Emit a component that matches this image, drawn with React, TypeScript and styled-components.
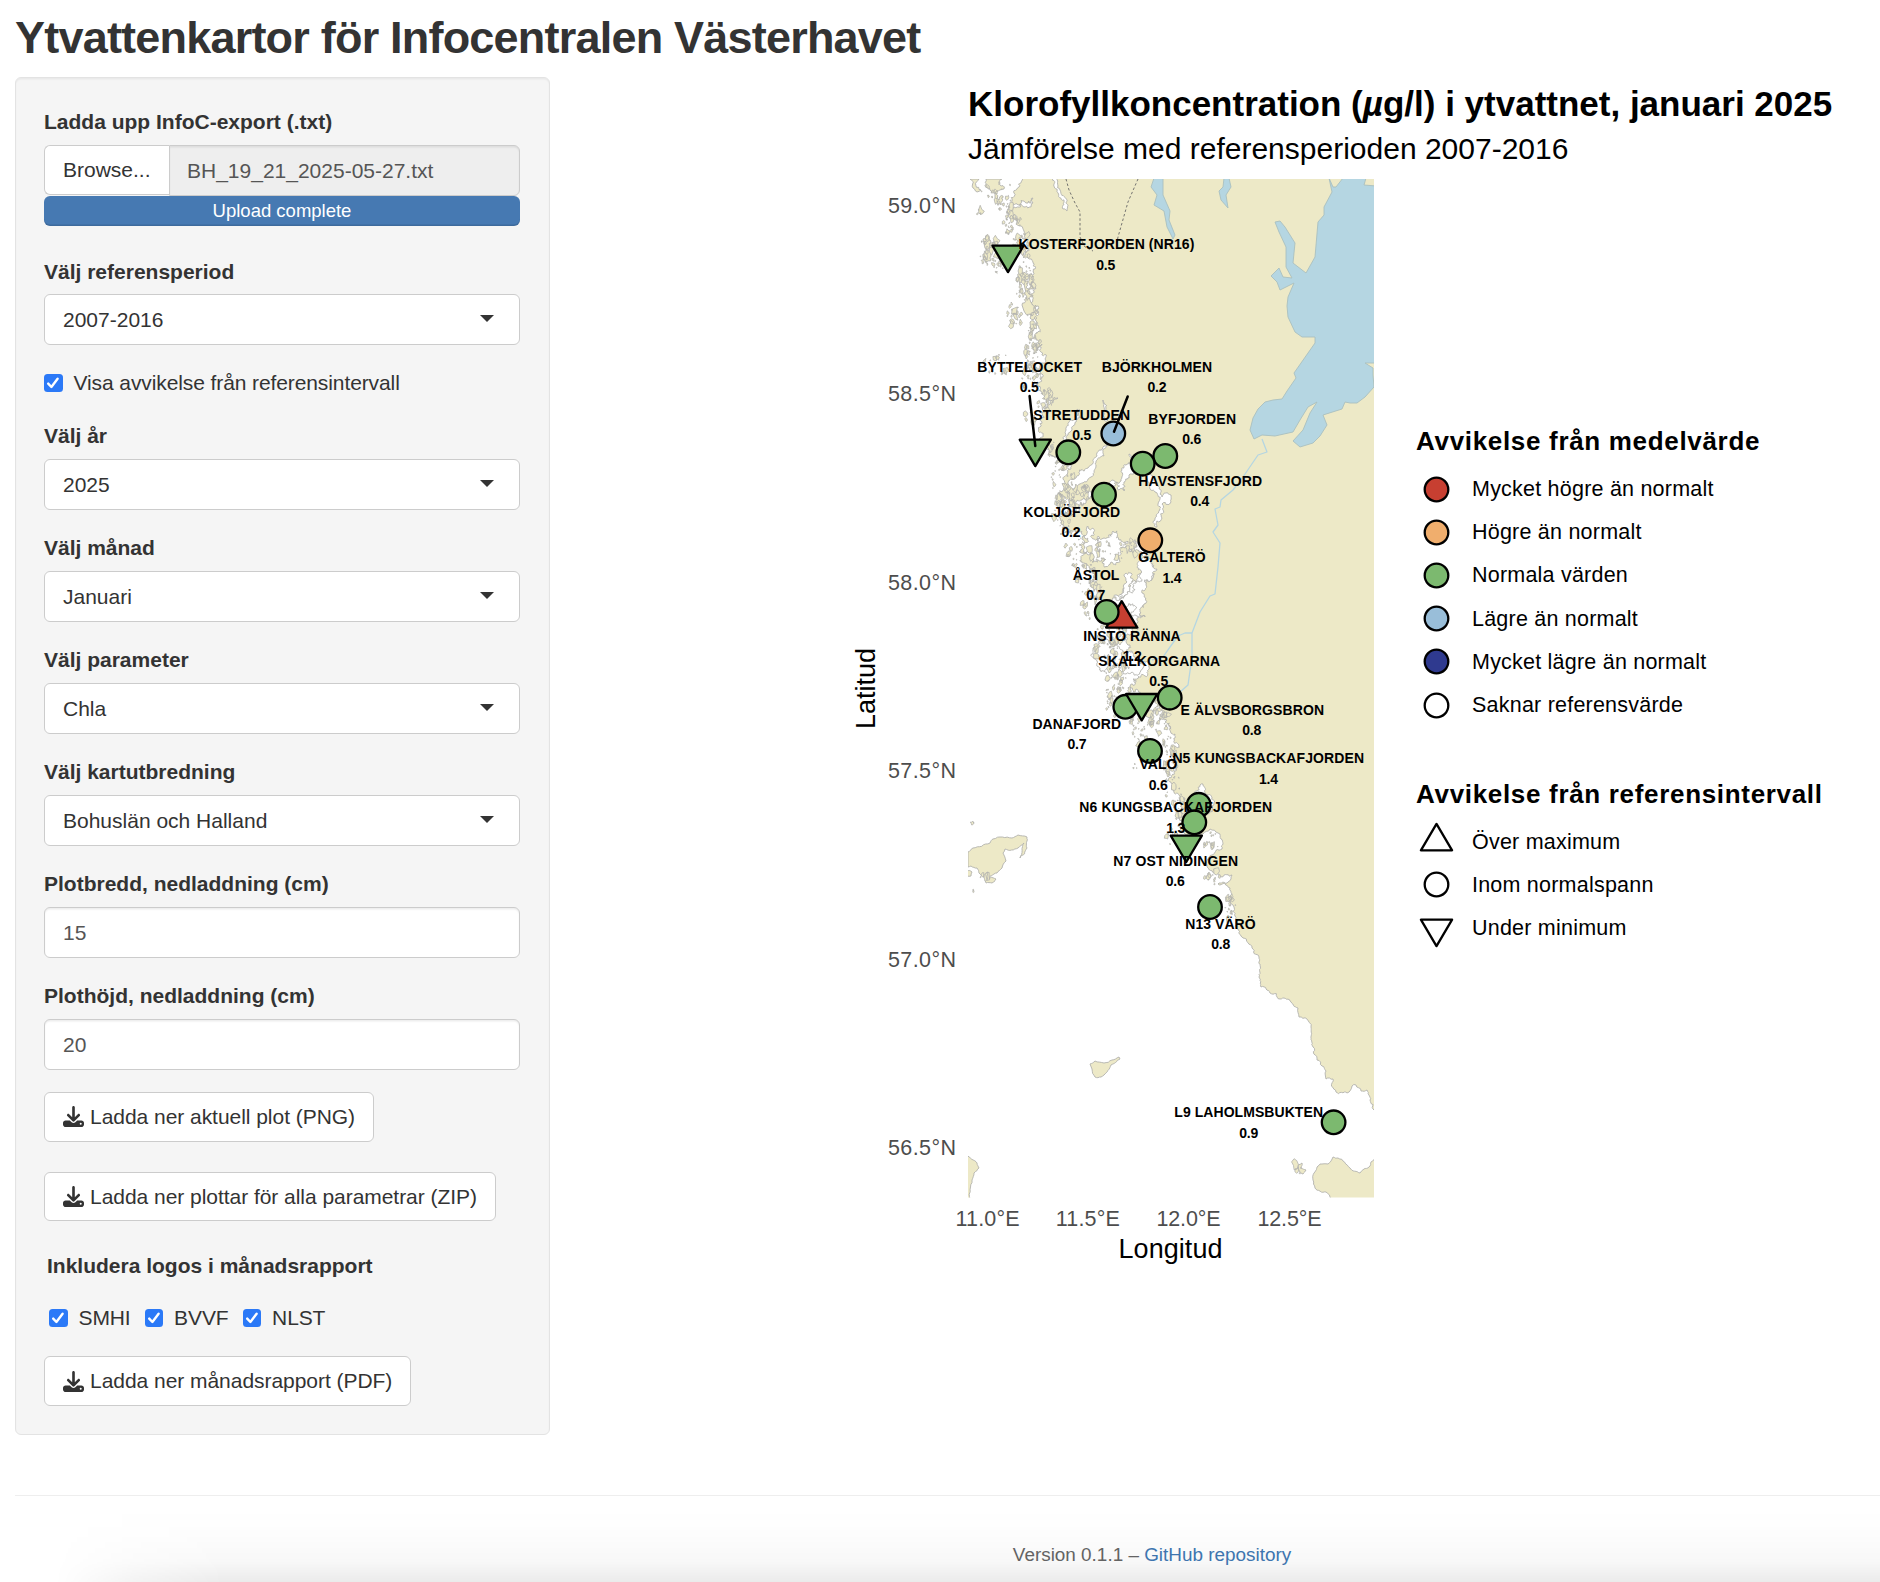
import React from "react";
import styled, { createGlobalStyle } from "styled-components";
import { FaDownload } from "react-icons/fa6";

const GlobalStyle = createGlobalStyle`
  *, *::before, *::after { box-sizing: border-box; }
  html, body { margin: 0; padding: 0; }
  body {
    background: #fff;
    color: #333;
    font-family: "Liberation Sans", Arial, Helvetica, sans-serif;
    font-size: 21px;
    line-height: 30px;
    overflow: hidden;
  }
`;

const Page = styled.div`
  width: 1880px;
  height: 1582px;
  display: flex;
  flex-direction: column;
  overflow: hidden;
`;

const PageTitle = styled.h1`
  margin: 0;
  padding: 13px 0 0 15px;
  height: 77px;
  font-size: 45px;
  font-weight: 700;
  line-height: 50px;
  letter-spacing: -0.79px;
  white-space: nowrap;
`;

const Columns = styled.div`
  display: flex;
  align-items: flex-start;
  height: 1418px;
`;

const Sidebar = styled.aside`
  width: 535px;
  height: 1358px;
  margin-left: 15px;
  padding: 29px 29px 28px 28px;
  background: #f5f5f5;
  border: 1px solid #e3e3e3;
  border-radius: 6px;
  box-shadow: inset 0 1.5px 1.5px rgba(0, 0, 0, 0.05);
  display: flex;
  flex-direction: column;
  align-items: stretch;
`;

const Field = styled.div<{ $after?: number; $gap?: number }>`
  display: flex;
  flex-direction: column;
  gap: ${(p) => p.$gap ?? 8}px;
  margin-bottom: ${(p) => p.$after ?? 23}px;
`;

const Label = styled.label<{ $indent?: number }>`
  font-weight: 700;
  padding-left: ${(p) => p.$indent ?? 0}px;
`;

const FileGroup = styled.div`
  display: flex;
  flex-direction: column;
`;

const FileRow = styled.div`
  display: flex;
  height: 51px;
`;

const BrowseButton = styled.button`
  width: 125px;
  height: 50px;
  padding: 0 0 0 18px;
  text-align: left;
  font: inherit;
  color: #333;
  background: #fff;
  border: 1px solid #ccc;
  border-right: 0;
  border-radius: 6px 0 0 6px;
`;

const FileName = styled.div`
  flex: 1;
  padding: 10px 17px;
  line-height: 30px;
  color: #555;
  background: #eee;
  border: 1px solid #ccc;
  border-radius: 0 6px 6px 0;
  box-shadow: inset 0 1.5px 1.5px rgba(0, 0, 0, 0.075);
`;

const Progress = styled.div`
  height: 30px;
  border-radius: 6px;
  background: #4679b2;
  box-shadow: inset 0 -1.5px 0 rgba(0, 0, 0, 0.12);
  color: #fff;
  font-size: 18.5px;
  line-height: 30px;
  text-align: center;
`;

const SelectBox = styled.div`
  height: 51px;
  padding: 0 25px 0 18px;
  display: flex;
  align-items: center;
  justify-content: space-between;
  background: #fff;
  border: 1px solid #ccc;
  border-radius: 6px;
  &::after {
    content: "";
    border: 7px solid transparent;
    border-top-color: #333;
    border-bottom: 0;
    margin-top: -3px;
  }
`;

const NumberBox = styled.div`
  height: 51px;
  padding: 0 18px;
  display: flex;
  align-items: center;
  color: #555;
  background: #fff;
  border: 1px solid #ccc;
  border-radius: 6px;
  box-shadow: inset 0 1.5px 1.5px rgba(0, 0, 0, 0.075);
`;

const CheckRow = styled.div<{ $indent?: number; $after: number }>`
  display: flex;
  gap: 14px;
  padding-left: ${(p) => p.$indent ?? 0}px;
  margin-bottom: ${(p) => p.$after}px;
`;

const CheckItem = styled.div`
  display: flex;
  align-items: center;
  gap: 11px;
  letter-spacing: -0.1px;
`;

const CheckMark = styled.span`
  width: 18.5px;
  height: 18px;
  border-radius: 3.5px;
  background: #2b79f7;
  display: flex;
  align-items: center;
  justify-content: center;
`;

const DownloadButton = styled.button<{ $after: number }>`
  align-self: flex-start;
  height: 50px;
  padding: 0 18px;
  margin-bottom: ${(p) => p.$after}px;
  display: flex;
  align-items: center;
  gap: 6px;
  font: inherit;
  letter-spacing: -0.04px;
  color: #333;
  background: #fff;
  border: 1px solid #ccc;
  border-radius: 6px;
  white-space: nowrap;
`;

const Plot = styled.main`
  margin-left: 290px;
  color: #000;
`;

const PlotTitle = styled.h2`
  margin: 6px 0 0 128px;
  font-size: 35px;
  line-height: 42px;
  font-weight: 700;
  white-space: nowrap;
`;

const PlotSubtitle = styled.p`
  margin: 6px 0 0 128px;
  font-size: 30px;
  line-height: 36px;
  white-space: nowrap;
`;

const PlotBody = styled.div`
  display: flex;
  align-items: flex-start;
`;

const MapSvg = styled.svg`
  display: block;
  margin-top: 3px;
  flex: none;
`;

const Legends = styled.div`
  margin: 257px 0 0 36px;
  display: flex;
  flex-direction: column;
  gap: 50px;
`;

const LegendTitle = styled.h3`
  margin: 0 0 9.5px;
  font-size: 26px;
  line-height: 34px;
  letter-spacing: 0.68px;
  white-space: nowrap;
`;

const LegendItem = styled.div`
  height: 43.2px;
  display: flex;
  align-items: center;
  gap: 15px;
  font-size: 21.5px;
  letter-spacing: 0.22px;
  white-space: nowrap;
`;

const Footer = styled.footer`
  position: relative;
  flex: 1;
  margin-left: 15px;
  padding: 44px 0 0 409px;
  border-top: 1.5px solid #eee;
  text-align: center;
  font-size: 18.9px;
  color: #666;
  &::after {
    content: "";
    position: absolute;
    inset: 12px 0 0 0;
    background: linear-gradient(
      rgba(0, 0, 0, 0) 0%,
      rgba(0, 0, 0, 0.006) 35%,
      rgba(0, 0, 0, 0.028) 72%,
      rgba(0, 0, 0, 0.08) 100%
    );
    mask-image: linear-gradient(90deg, transparent 40px, rgba(0, 0, 0, 0.6) 120px, #000 210px);
    pointer-events: none;
  }
`;

const FooterLink = styled.a`
  color: #4078b4;
  text-decoration: none;
`;

type Pt = [number, number];

const makeRandom = (seed: number) => () => {
  seed = (seed + 0x6d2b79f5) | 0;
  let t = Math.imul(seed ^ (seed >>> 15), 1 | seed);
  t = (t + Math.imul(t ^ (t >>> 7), 61 | t)) ^ t;
  return ((t ^ (t >>> 14)) >>> 0) / 4294967296;
};

const pts = (s: string): Pt[] => s.split(" ").map((p) => p.split(",").map(Number) as Pt);

function roughen(line: Pt[], amount: number, seed: number, minLength = 2.5): Pt[] {
  const rnd = makeRandom(seed);
  const out: Pt[] = [line[0]];
  const split = (a: Pt, b: Pt) => {
    const dx = b[0] - a[0];
    const dy = b[1] - a[1];
    const len = Math.hypot(dx, dy);
    if (len < minLength) {
      out.push(b);
      return;
    }
    const k = (rnd() - 0.5) * amount;
    const m: Pt = [(a[0] + b[0]) / 2 - dy * k, (a[1] + b[1]) / 2 + dx * k];
    split(a, m);
    split(m, b);
  };
  for (let i = 1; i < line.length; i++) split(line[i - 1], line[i]);
  return out;
}

const toPath = (line: Pt[]) => "M" + line.map((p) => p[0].toFixed(1) + " " + p[1].toFixed(1)).join("L");

const skerryCoast = pts(
  "1023,179 1019,187 1014,193 1012,203 1008,206 1018,205 1026,203 1033,198 1033,203 1024,207 1012,210 1010,215 1017,221 1021,226 1024,231 1022,238 1028,246 1026,252 1033,262 1035,269 1030,274 1029,282 1036,288 1031,294 1031,303 1037,306 1039,312 1036,315 1032,311 1030,318 1037,322 1038,332 1036,338 1042,344 1041,352 1045,359 1040,366 1042,374 1037,382 1042,392 1049,399 1058,398 1050,404 1043,412 1042,422 1038,428 1043,435 1042,443 1050,450 1054,457 1062,463 1068,472 1063,479 1066,486 1064,497 1069,503 1064,514 1063,526 1060,534 1067,527 1076,532 1080,545 1086,553 1083,563 1089,568 1093,578 1094,590 1098,600 1108,601 1117,599 1127,590 1137,582 1143,572 1140,565 1146,557 1151,565 1150,580 1141,588 1138,597 1144,605 1136,608 1145,617 1137,620 1139,628 1127,634 1130,645 1126,652 1133,659 1150,661 1149,669 1145,676 1133,679 1131,688 1128,695 1147,697 1158,699 1160,707 1157,714 1165,722 1171,727 1175,734 1172,750 1177,762 1172,775 1174,792 1180,804 1177,812 1183,820 1183,832",
);
const southCoast = pts(
  "1183,832 1193,836 1203,834 1210,829 1218,833 1221,839 1222,849 1212,855 1207,867 1215,873 1222,877 1232,875 1231,879 1228,882 1218,884 1230,888 1232,894 1228,900 1234,907 1235,916 1238,929 1243,938 1252,948 1259,957 1259,977 1261,987 1270,993 1280,999 1290,1001 1298,1008 1299,1017 1307,1019 1311,1027 1313,1047 1317,1060 1322,1066 1326,1071 1326,1079 1333,1079 1336,1092 1347,1093 1352,1086 1356,1085 1361,1091 1367,1090 1370,1100 1374,1110",
);

const mainland =
  toPath([...roughen(skerryCoast, 1.0, 11, 2), ...roughen(southCoast, 0.5, 5, 2.5)]) + "L1376 1110L1376 177L1023 177Z";

const smoothIslands = [
  "968,852 973,848 990,843 993,839 1012,838 1018,835 1027,837 1027,848 1020,858 1024,843 1018,848 1005,849 1003,853 1006,861 1002,868 997,873 985,878 979,873 977,868 971,866 968,867",
  "1090,1064 1095,1061 1104,1063 1112,1060 1119,1057 1120,1059 1111,1065 1104,1075 1101,1077 1095,1077 1092,1069",
  "967,1155 977,1163 979,1168 974,1173 972,1180 970,1199 967,1199",
  "1331,1199 1326,1192 1315,1188 1313,1180 1314,1173 1320,1164 1328,1164 1333,1157 1338,1158 1350,1168 1360,1173 1369,1167 1375,1158 1375,1199",
  "1298,1165 1302,1163 1301,1168 1306,1170 1303,1174 1299,1171",
  "985,880 990,877 996,879 992,883 986,883",
  "967,870 972,872 971,876 967,876",
  "970,179 977,192 981,190 979,179",
  "986,179 990,190 997,194 1004,189 1002,179",
  "995,192 999,200 1003,196 1001,205 995,200",
  "983,239 988,240 990,246 986,250 991,256 986,262 983,254 985,248",
  "1018,276 1022,273 1027,276 1026,283 1020,285",
  "1024,284 1028,281 1030,292 1033,295 1027,297",
  "1022,305 1030,300 1036,305 1038,312 1031,314 1024,311",
  "1030,322 1034,321 1035,328 1031,332",
];

const fjords: [string, number][] = [
  ["1068,484 1076,478 1088,468 1097,456 1104,446 1109,443 1104,456 1096,467 1091,477 1080,484 1073,490", 0.5],
  ["1063,441 1066,430 1074,420 1077,409 1080,410 1075,423 1068,435 1066,442", 0.6],
  ["1103,400 1106,408 1108,420 1105,421 1103,412", 0.7],
  ["1074,504 1082,500 1086,490 1092,492 1086,503 1079,511 1070,515 1068,508", 0.9],
  ["1115,486 1121,481 1122,470 1127,464 1133,467 1129,475 1124,482 1124,491 1119,490 1110,484", 1.0],
  ["1129,454 1138,457 1150,474 1158,486 1162,497 1171,495 1168,505 1162,504 1162,518 1157,527 1155,519 1158,504 1155,492 1146,477 1134,463", 0.7],
  ["1084,535 1096,550 1104,538 1113,531 1119,540 1128,541 1133,550 1141,540 1147,546 1146,556 1135,553 1124,548 1119,558 1111,562 1101,558 1092,562", 1.2],
  ["1140,558 1152,560 1152,578 1146,585 1142,593 1144,604 1141,613 1132,616 1121,601 1125,592 1134,586 1142,572", 0.9],
  ["1124,576 1131,573 1132,583 1127,592 1116,600 1124,588", 0.9],
  ["1093,648 1108,640 1124,652 1140,662 1138,675 1126,674 1118,664 1105,672 1098,662", 0.8],
  ["1200,785 1203,784 1205,793 1214,804 1212,812 1202,817 1195,826 1192,815 1199,800", 0.7],
  ["1052,178 1057,178 1060,190 1066,203 1067,211 1063,209 1058,193", 0.5],
];

const lakes = [
  "1343,178 1366,178 1364,185 1376,186 1376,363 1365,363 1373,368 1373,375 1374,387 1365,397 1357,403 1350,403 1345,402 1342,409 1323,415 1327,425 1320,436 1313,443 1300,447 1293,441 1303,430 1310,413 1317,402 1308,407 1300,420 1293,432 1275,436 1262,435 1254,439 1250,430 1253,418 1258,409 1265,402 1273,400 1282,399 1287,391 1296,378 1294,373 1308,353 1315,343 1315,337 1302,337 1295,332 1288,317 1287,306 1288,297 1294,283 1280,290 1277,282 1271,276 1279,268 1283,277 1292,278 1286,267 1286,247 1279,232 1275,222 1280,221 1285,227 1295,243 1293,263 1306,273 1315,257 1318,222 1324,215 1324,207 1332,192 1329,178 1333,187 1336,187",
  "1154,178 1163,178 1163,195 1170,211 1169,220 1175,235 1173,239 1167,227 1164,211 1154,205 1157,195 1151,187",
  "1224,178 1229,178 1231,187 1226,195 1228,208 1221,200 1219,191 1223,187",
];

const rivers = [
  "1262,439 1267,452 1258,455 1243,477 1233,490 1221,500 1220,507 1215,509 1218,525 1213,532 1220,543 1218,567 1215,594 1210,596 1200,612 1192,633 1192,657 1188,685 1180,692",
  "1192,633 1185,633 1178,636 1170,647 1163,657 1152,660",
];

const borders = [
  "1066,179 1069,190 1075,203 1080,212 1080,237 1085,247 1093,251",
  "1138,179 1128,202 1122,223 1118,237 1117,242",
];

const clusters: [number, number, number, number, number][] = [
  [997, 190, 20, 12, 14],
  [1006, 205, 9, 8, 12],
  [1013, 224, 9, 15, 26],
  [978, 212, 5, 3, 4],
  [989, 250, 10, 15, 26],
  [1000, 265, 12, 8, 20],
  [1022, 246, 10, 14, 24],
  [1024, 280, 10, 20, 40],
  [1014, 315, 9, 12, 20],
  [1031, 318, 8, 12, 12],
  [1033, 350, 8, 24, 38],
  [998, 366, 15, 14, 14],
  [1032, 380, 10, 16, 22],
  [1046, 402, 8, 14, 18],
  [1030, 418, 6, 8, 6],
  [1054, 452, 7, 14, 14],
  [1062, 478, 11, 20, 32],
  [1064, 512, 12, 22, 42],
  [1078, 495, 11, 14, 22],
  [1074, 548, 10, 18, 20],
  [1085, 575, 10, 14, 16],
  [1093, 600, 12, 20, 30],
  [1108, 552, 20, 12, 24],
  [1136, 545, 12, 10, 12],
  [1112, 632, 15, 15, 36],
  [1107, 650, 13, 12, 24],
  [1118, 672, 12, 20, 46],
  [1114, 700, 10, 16, 26],
  [1142, 722, 11, 24, 46],
  [1160, 722, 10, 16, 24],
  [1168, 752, 9, 16, 20],
  [1172, 782, 8, 22, 24],
  [1180, 808, 9, 14, 20],
  [1134, 766, 4, 3, 3],
  [1174, 836, 8, 10, 8],
  [1212, 842, 9, 10, 12],
  [1212, 877, 8, 8, 12],
  [1228, 905, 8, 14, 18],
  [972, 823, 2, 1, 2],
  [972, 891, 2, 2, 2],
  [1300, 1168, 7, 6, 4],
  [984, 876, 10, 4, 5],
  [1210, 812, 6, 10, 5],
];

const islets = (() => {
  const rnd = makeRandom(77);
  let d = "";
  clusters.forEach(([cx, cy, rx, ry, n]) => {
    for (let i = 0; i < n; i++) {
      const a = rnd() * Math.PI * 2;
      const r = Math.sqrt(rnd());
      const x = cx + Math.cos(a) * rx * r;
      const y = cy + Math.sin(a) * ry * r;
      const size = 0.4 + Math.pow(rnd(), 3) * 3.4;
      const corner: Pt[] = [];
      for (let k = 0; k < 7; k++) {
        const t = (k / 7) * Math.PI * 2;
        const s = size * (0.4 + rnd());
        corner.push([x + Math.cos(t) * s * 0.8, y + Math.sin(t) * s * 1.25]);
      }
      d += toPath(corner) + "Z";
    }
  });
  return d;
})();

const LAND = "#ede9c7";
const COAST = "#b2b2ae";
const WATER = "#b5d6e2";
const GREEN = "#7cb96f";
const RED = "#c73f31";
const ORANGE = "#f0ae6d";
const BLUE = "#99bed9";
const NAVY = "#2f3a8f";

type Shape = "circle" | "up" | "down";

function Marker({ shape, x, y, fill }: { shape: Shape; x: number; y: number; fill: string }) {
  const common = { fill, stroke: "#000", strokeWidth: 2.3, strokeLinejoin: "round" as const };
  if (shape === "circle") return <circle cx={x} cy={y} r={11.8} {...common} />;
  const s = shape === "up" ? -1 : 1;
  return (
    <path d={`M${x - 15.6} ${y - 8.8 * s}H${x + 15.6}L${x} ${y + 17.6 * s}Z`} {...common} />
  );
}

const stations: [Shape, number, number, string][] = [
  ["down", 1008, 254.5, GREEN],
  ["down", 1035.3, 448.5, GREEN],
  ["circle", 1068.3, 452.3, GREEN],
  ["circle", 1113.3, 433.5, BLUE],
  ["circle", 1165.3, 456, GREEN],
  ["circle", 1142.7, 463.7, GREEN],
  ["circle", 1104, 494.7, GREEN],
  ["circle", 1150.3, 540.3, ORANGE],
  ["up", 1121.7, 618.8, RED],
  ["circle", 1106.7, 612, GREEN],
  ["circle", 1125.3, 706.8, GREEN],
  ["down", 1141.7, 702.8, GREEN],
  ["circle", 1169.7, 697.7, GREEN],
  ["circle", 1150, 751, GREEN],
  ["circle", 1198.7, 804.8, GREEN],
  ["down", 1186.3, 844.4, GREEN],
  ["circle", 1194.3, 822.3, GREEN],
  ["circle", 1210, 907, GREEN],
  ["circle", 1333.6, 1122.3, GREEN],
];

const labels: [string, number, number, number, string, number, number][] = [
  ["KOSTERFJORDEN (NR16)", 1018.6, 1194.3, 249, "0.5", 1105.7, 270],
  ["BYTTELOCKET", 977.3, 1082, 372, "0.5", 1029.3, 392],
  ["BJÖRKHOLMEN", 1101.7, 1212, 372, "0.2", 1157, 392],
  ["STRETUDDEN", 1033.3, 1130.2, 420, "0.5", 1081.8, 440],
  ["BYFJORDEN", 1148.3, 1236, 424, "0.6", 1191.8, 444],
  ["HAVSTENSFJORD", 1138.3, 1262, 486, "0.4", 1199.7, 506],
  ["KOLJÖFJORD", 1023.3, 1120, 517, "0.2", 1071, 537],
  ["GALTERÖ", 1138.3, 1205.7, 562, "1.4", 1172, 583],
  ["ÅSTOL", 1072.7, 1119.3, 580, "0.7", 1095.8, 600],
  ["INSTÖ RÄNNA", 1083.3, 1180.7, 641, "1.2", 1132.2, 661],
  ["SKALKORGARNA", 1098.3, 1220, 666, "0.5", 1158.7, 686],
  ["E ÄLVSBORGSBRON", 1180.5, 1324, 715, "0.8", 1251.8, 735],
  ["DANAFJORD", 1032.4, 1121, 729, "0.7", 1077, 749],
  ["VALÖ", 1139.6, 1177.3, 769, "0.6", 1158.2, 790],
  ["N5 KUNGSBACKAFJORDEN", 1172.4, 1364, 763, "1.4", 1268.5, 784],
  ["N6 KUNGSBACKAFJORDEN", 1079.3, 1272, 812, "1.3", 1175.8, 833],
  ["N7 OST NIDINGEN", 1113.3, 1238, 866, "0.6", 1175.2, 886],
  ["N13 VÄRÖ", 1185.3, 1255.6, 929, "0.8", 1220.8, 949],
  ["L9 LAHOLMSBUKTEN", 1174.3, 1323, 1117, "0.9", 1248.8, 1138],
];

const latitudes: [string, number][] = [
  ["59.0°N", 205.5],
  ["58.5°N", 393.5],
  ["58.0°N", 582],
  ["57.5°N", 770],
  ["57.0°N", 959],
  ["56.5°N", 1147.3],
];

const longitudes: [string, number][] = [
  ["11.0°E", 987.5],
  ["11.5°E", 1087.8],
  ["12.0°E", 1188.5],
  ["12.5°E", 1289.5],
];

function StationMap() {
  return (
    <MapSvg width="540" height="1110" viewBox="840 170 540 1110" fontFamily='"Liberation Sans", Arial, sans-serif'>
      <clipPath id="panel">
        <rect x="968" y="179" width="406" height="1018.5" />
      </clipPath>
      <g clipPath="url(#panel)" strokeWidth="0.9" strokeLinejoin="round">
        <path d={mainland} fill={LAND} stroke={COAST} />
        {smoothIslands.map((s, i) => (
          <path key={i} d={toPath(roughen(pts(s), i > 6 ? 0.8 : 0.25, i + 40)) + "Z"} fill={LAND} stroke={COAST} />
        ))}
        {fjords.map(([s, amount], i) => (
          <path key={i} d={toPath(roughen(pts(s + " " + s.split(" ")[0]), amount, i + 90, 2)) + "Z"} fill="#fff" stroke={COAST} />
        ))}
        <path d={islets} fill={LAND} stroke={COAST} strokeWidth="0.8" />
        {lakes.map((s) => (
          <path key={s} d={toPath(pts(s)) + "Z"} fill={WATER} stroke="#a9bfc0" />
        ))}
        {rivers.map((s) => (
          <path key={s} d={toPath(pts(s))} fill="none" stroke={WATER} strokeWidth="1.3" />
        ))}
        {borders.map((s) => (
          <path key={s} d={toPath(pts(s))} fill="none" stroke="#666" strokeDasharray="2.5 2.2" />
        ))}
      </g>
      {stations.map(([shape, x, y, fill], i) => (
        <Marker key={i} shape={shape} x={x} y={y} fill={fill} />
      ))}
      <g stroke="#000" strokeWidth="2.5" strokeLinecap="round">
        <path d="M1029.6 396L1035.3 446" />
        <path d="M1127.7 396.5L1114 431.7" />
      </g>
      <g fontSize="14" fontWeight="700" fill="#000">
        {labels.map(([name, x0, x1, y, value, vx, vy]) => (
          <React.Fragment key={name}>
            <text x={x0} y={y} textLength={x1 - x0}>{name}</text>
            <text x={vx - 9.5} y={vy} textLength={19}>{value}</text>
          </React.Fragment>
        ))}
      </g>
      <g fontSize="21.5" fill="#4d4d4d">
        {latitudes.map(([t, y]) => (
          <text key={t} x={888} y={y + 7.7} textLength={68}>{t}</text>
        ))}
        {longitudes.map(([t, x]) => (
          <text key={t} x={x - 32} y={1225.5} textLength={64}>{t}</text>
        ))}
      </g>
      <g fontSize="27" fill="#000">
        <text x={1118.5} y={1258} textLength={104}>Longitud</text>
        <text transform="translate(875 729) rotate(-90)" textLength={81}>Latitud</text>
      </g>
    </MapSvg>
  );
}

function LegendKey({ shape, fill }: { shape: Shape; fill: string }) {
  return (
    <svg width="41" height="43" viewBox="-20.5 -21.5 41 43">
      <Marker shape={shape} x={0} y={0} fill={fill} />
    </svg>
  );
}

const colourKeys: [string, string][] = [
  [RED, "Mycket högre än normalt"],
  [ORANGE, "Högre än normalt"],
  [GREEN, "Normala värden"],
  [BLUE, "Lägre än normalt"],
  [NAVY, "Mycket lägre än normalt"],
  ["#fff", "Saknar referensvärde"],
];

const shapeKeys: [Shape, string][] = [
  ["up", "Över maximum"],
  ["circle", "Inom normalspann"],
  ["down", "Under minimum"],
];

function Check({ text }: { text: string }) {
  return (
    <CheckItem>
      <CheckMark>
        <svg width="14" height="14" viewBox="0 0 14 14" fill="none" stroke="#fff" strokeWidth="2.4" strokeLinecap="round" strokeLinejoin="round">
          <path d="M2.2 7.6L5.4 11L11.6 2.8" />
        </svg>
      </CheckMark>
      {text}
    </CheckItem>
  );
}

const selects: [string, string][] = [
  ["Välj år", "2025"],
  ["Välj månad", "Januari"],
  ["Välj parameter", "Chla"],
  ["Välj kartutbredning", "Bohuslän och Halland"],
];

const numbers: [string, string][] = [
  ["Plotbredd, nedladdning (cm)", "15"],
  ["Plothöjd, nedladdning (cm)", "20"],
];

export default function App() {
  return (
    <Page>
      <GlobalStyle />
      <PageTitle>Ytvattenkartor för Infocentralen Västerhavet</PageTitle>
      <Columns>
        <Sidebar>
          <Field $after={31}>
            <Label>Ladda upp InfoC-export (.txt)</Label>
            <FileGroup>
              <FileRow>
                <BrowseButton>Browse...</BrowseButton>
                <FileName>BH_19_21_2025-05-27.txt</FileName>
              </FileRow>
              <Progress>Upload complete</Progress>
            </FileGroup>
          </Field>
          <Field $gap={7}>
            <Label>Välj referensperiod</Label>
            <SelectBox>2007-2016</SelectBox>
          </Field>
          <CheckRow $after={23}>
            <Check text="Visa avvikelse från referensintervall" />
          </CheckRow>
          {selects.map(([label, value]) => (
            <Field key={label}>
              <Label>{label}</Label>
              <SelectBox>{value}</SelectBox>
            </Field>
          ))}
          {numbers.map(([label, value], i) => (
            <Field key={label} $after={i === 1 ? 22 : 23}>
              <Label>{label}</Label>
              <NumberBox>{value}</NumberBox>
            </Field>
          ))}
          <DownloadButton $after={30}>
            <FaDownload size={21} />
            Ladda ner aktuell plot (PNG)
          </DownloadButton>
          <DownloadButton $after={30}>
            <FaDownload size={21} />
            Ladda ner plottar för alla parametrar (ZIP)
          </DownloadButton>
          <Field $after={22}>
            <Label $indent={3}>Inkludera logos i månadsrapport</Label>
          </Field>
          <CheckRow $indent={5} $after={23}>
            <Check text="SMHI" />
            <Check text="BVVF" />
            <Check text="NLST" />
          </CheckRow>
          <DownloadButton $after={0}>
            <FaDownload size={21} />
            Ladda ner månadsrapport (PDF)
          </DownloadButton>
        </Sidebar>
        <Plot>
          <PlotTitle>
            Klorofyllkoncentration (<i>µ</i>g/l) i ytvattnet, januari 2025
          </PlotTitle>
          <PlotSubtitle>Jämförelse med referensperioden 2007-2016</PlotSubtitle>
          <PlotBody>
            <StationMap />
            <Legends>
              <section>
                <LegendTitle>Avvikelse från medelvärde</LegendTitle>
                {colourKeys.map(([fill, text]) => (
                  <LegendItem key={text}>
                    <LegendKey shape="circle" fill={fill} />
                    {text}
                  </LegendItem>
                ))}
              </section>
              <section>
                <LegendTitle>Avvikelse från referensintervall</LegendTitle>
                {shapeKeys.map(([shape, text]) => (
                  <LegendItem key={text}>
                    <LegendKey shape={shape} fill="#fff" />
                    {text}
                  </LegendItem>
                ))}
              </section>
            </Legends>
          </PlotBody>
        </Plot>
      </Columns>
      <Footer>
        Version 0.1.1 – <FooterLink href="#">GitHub repository</FooterLink>
      </Footer>
    </Page>
  );
}
